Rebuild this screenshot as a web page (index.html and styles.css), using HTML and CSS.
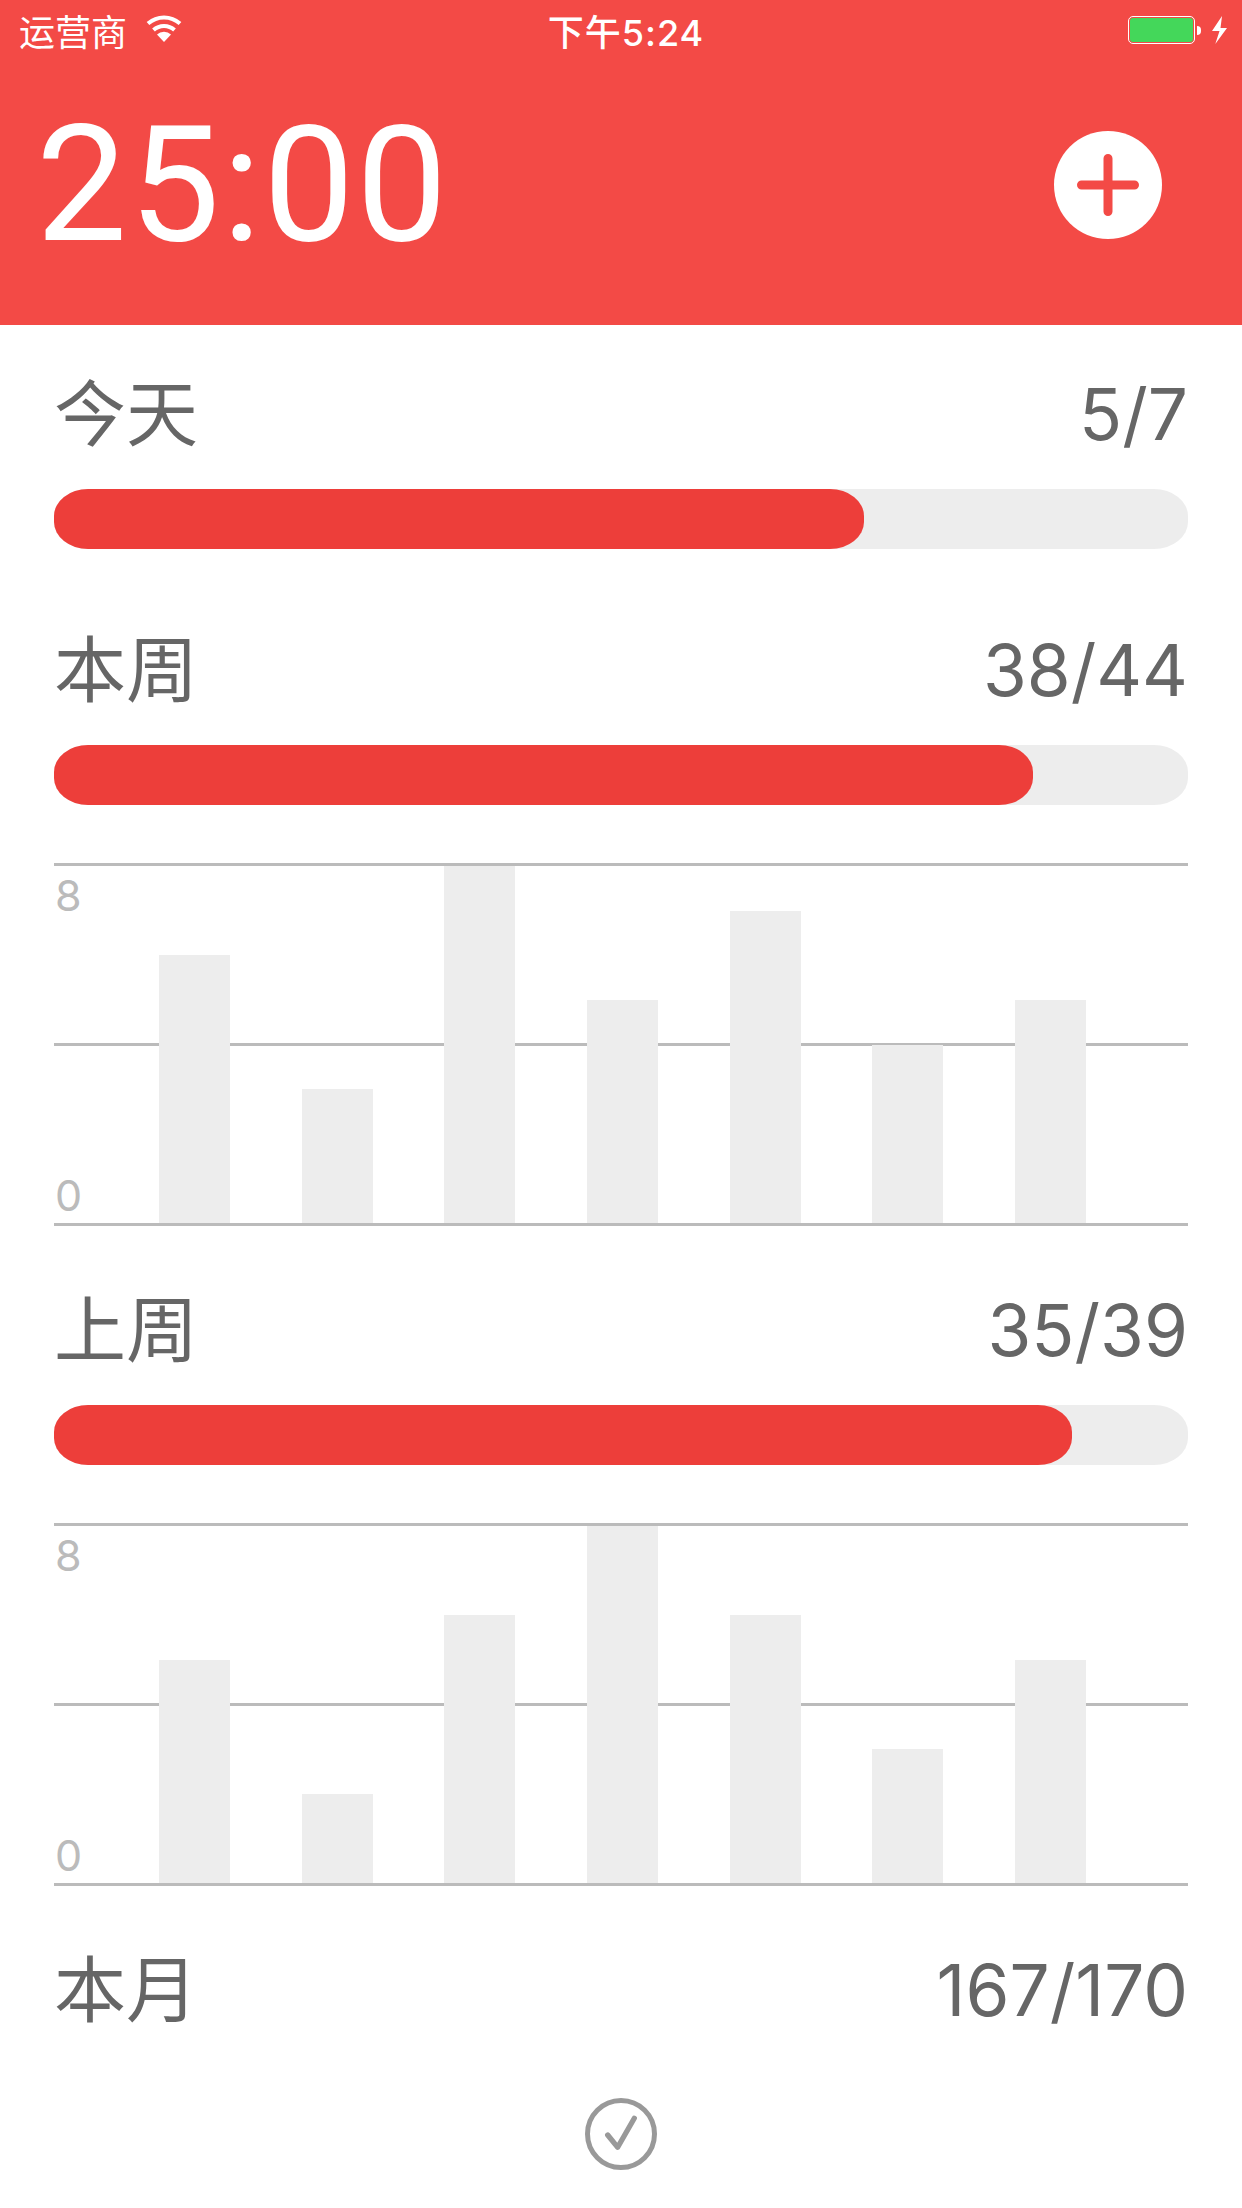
FILE: index.html
```html
<!DOCTYPE html>
<html lang="zh-CN">
<head>
    <meta charset="UTF-8">
    <meta name="viewport" content="width=device-width, initial-scale=1.0">
    <title>番茄统计</title>
    <link rel="stylesheet" href="styles.css">
</head>
<body>
    <header class="top">
        <div class="status">
            <div class="status-left">
                <span>运营商</span>
                <svg class="wifi" viewBox="0 0 38 28" width="38" height="28">
                    <path d="M19 28 L12 20.5 A10 10 0 0 1 26 20.5 Z" fill="#fff"/>
                    <path d="M8.5 16 A15.5 15.5 0 0 1 29.5 16" fill="none" stroke="#fff" stroke-width="4"/>
                    <path d="M3 9.5 A24 24 0 0 1 35 9.5" fill="none" stroke="#fff" stroke-width="4"/>
                </svg>
            </div>
            <div class="status-time">下午5:24</div>
            <div class="status-right">
                <div class="battery"><div class="battery-level"></div></div>
                <div class="battery-nub"></div>
                <svg class="bolt" viewBox="0 0 15 28" width="15" height="28">
                    <path d="M10 0 L0 15 H7.5 L3.3 28 L15 12 H8.5 Z" fill="#fff"/>
                </svg>
            </div>
        </div>
        <div class="timer-row">
            <div class="timer">25:00</div>
            <svg class="add" viewBox="0 0 108 108" width="108" height="108">
                <circle cx="54" cy="54" r="54" fill="#fff"/>
                <path d="M27.5 54 H80.5 M54 27.5 V80.5" stroke="#f34a46" stroke-width="9" stroke-linecap="round"/>
            </svg>
        </div>
    </header>

    <main class="stats">
        <section class="block">
            <div class="row"><span class="name">今天</span><span class="count">5/7</span></div>
            <div class="track"><div class="fill" style="width: 71.43%"></div></div>
        </section>

        <section class="block has-chart">
            <div class="row"><span class="name">本周</span><span class="count">38/44</span></div>
            <div class="track"><div class="fill" style="width: 86.36%"></div></div>
            <div class="chart">
                <div class="midline"></div>
                <div class="scale"><span>8</span><span>0</span></div>
                <div class="bars">
                    <div class="bar" style="height: 75%"></div>
                    <div class="bar" style="height: 37.5%"></div>
                    <div class="bar" style="height: 100%"></div>
                    <div class="bar" style="height: 62.5%"></div>
                    <div class="bar" style="height: 87.5%"></div>
                    <div class="bar" style="height: 50%"></div>
                    <div class="bar" style="height: 62.5%"></div>
                </div>
            </div>
        </section>

        <section class="block has-chart">
            <div class="row"><span class="name">上周</span><span class="count">35/39</span></div>
            <div class="track"><div class="fill" style="width: 89.74%"></div></div>
            <div class="chart">
                <div class="midline"></div>
                <div class="scale"><span>8</span><span>0</span></div>
                <div class="bars">
                    <div class="bar" style="height: 62.5%"></div>
                    <div class="bar" style="height: 25%"></div>
                    <div class="bar" style="height: 75%"></div>
                    <div class="bar" style="height: 100%"></div>
                    <div class="bar" style="height: 75%"></div>
                    <div class="bar" style="height: 37.5%"></div>
                    <div class="bar" style="height: 62.5%"></div>
                </div>
            </div>
        </section>

        <section class="block">
            <div class="row"><span class="name">本月</span><span class="count">167/170</span></div>
        </section>
    </main>

    <footer class="bottom">
        <svg class="check" viewBox="0 0 72 72" width="72" height="72">
            <circle cx="36" cy="36" r="33.5" fill="none" stroke="#999" stroke-width="5"/>
            <path d="M22.7 37 L32.7 49.3 L49.3 20.3" fill="none" stroke="#999" stroke-width="5.3" stroke-linecap="round" stroke-linejoin="round"/>
        </svg>
    </footer>
</body>
</html>
```

FILE: styles.css
```css
* {
    box-sizing: border-box;
}
body {
    margin: 0;
    width: 1242px;
    height: 2208px;
    overflow: hidden;
    background-color: #fff;
    font-family: Inter, "Noto Sans CJK SC", sans-serif;
    color: #666;
}
.top {
    height: 325px;
    background-color: #f34a46;
    color: #fff;
}
.status {
    display: grid;
    grid-template-columns: 1fr auto 1fr;
    align-items: center;
    height: 60px;
    padding: 0 15px 0 19px;
    font-size: 36px;
}
.status-left {
    display: flex;
    align-items: center;
    gap: 18px;
    font-family: "Noto Sans CJK SC", sans-serif;
}
.wifi {
    margin-bottom: 4px;
}
.status-time {
    margin-left: 6px;
    font-weight: 500;
    letter-spacing: 1px;
}
.status-right {
    display: flex;
    align-items: center;
    justify-content: flex-end;
}
.battery {
    width: 67px;
    height: 28px;
    padding: 1px;
    border: 1px solid #fff;
    border-radius: 5px;
}
.battery-level {
    height: 100%;
    background-color: #44d75a;
    border-radius: 3px;
}
.battery-nub {
    width: 4px;
    height: 9px;
    margin-left: 2px;
    background-color: #fff;
    border-radius: 0 4px 4px 0;
}
.bolt {
    margin-left: 11px;
}
.timer-row {
    display: flex;
    align-items: center;
    justify-content: space-between;
    height: 250px;
    padding: 0 80px 0 36px;
}
.timer {
    font-family: Roboto, sans-serif;
    font-weight: 400;
    font-size: 162px;
    line-height: 1;
    letter-spacing: 2px;
}
.stats {
    padding: 37px 54px 0;
}
.block {
    margin-bottom: 69px;
}
.has-chart {
    margin-bottom: 52px;
}
.block:last-child {
    margin-bottom: 0;
}
.row {
    display: flex;
    align-items: center;
    justify-content: space-between;
    height: 104px;
    margin-bottom: 23px;
}
.name {
    margin-bottom: 10px;
    font-family: "Noto Sans CJK SC", sans-serif;
    font-weight: 400;
    font-size: 72px;
    line-height: 94px;
}
.count {
    font-weight: 400;
    font-size: 71px;
    line-height: 104px;
}
.track {
    height: 60px;
    background-color: #ededed;
    border-radius: 34px / 27px;
}
.fill {
    height: 100%;
    background-color: #ed3e3a;
    border-radius: 34px / 27px;
}
.chart {
    display: grid;
    height: 363px;
    margin-top: 58px;
    border-top: 3px solid #bbb;
    border-bottom: 3px solid #bbb;
}
.midline,
.scale,
.bars {
    grid-area: 1 / 1;
}
.midline {
    align-self: center;
    height: 3px;
    background-color: #bbb;
}
.scale {
    display: flex;
    flex-direction: column;
    justify-content: space-between;
    padding: 3px 0 2px 1px;
    font-weight: 400;
    font-size: 43px;
    line-height: 52px;
    color: #bbb;
}
.bars {
    display: flex;
    align-items: flex-end;
    justify-content: space-between;
    padding: 0 102px 0 105px;
}
.bar {
    width: 71px;
    background-color: #ededed;
}
.bottom {
    display: flex;
    justify-content: center;
    margin-top: 56px;
}
.check {
    display: block;
}
```
